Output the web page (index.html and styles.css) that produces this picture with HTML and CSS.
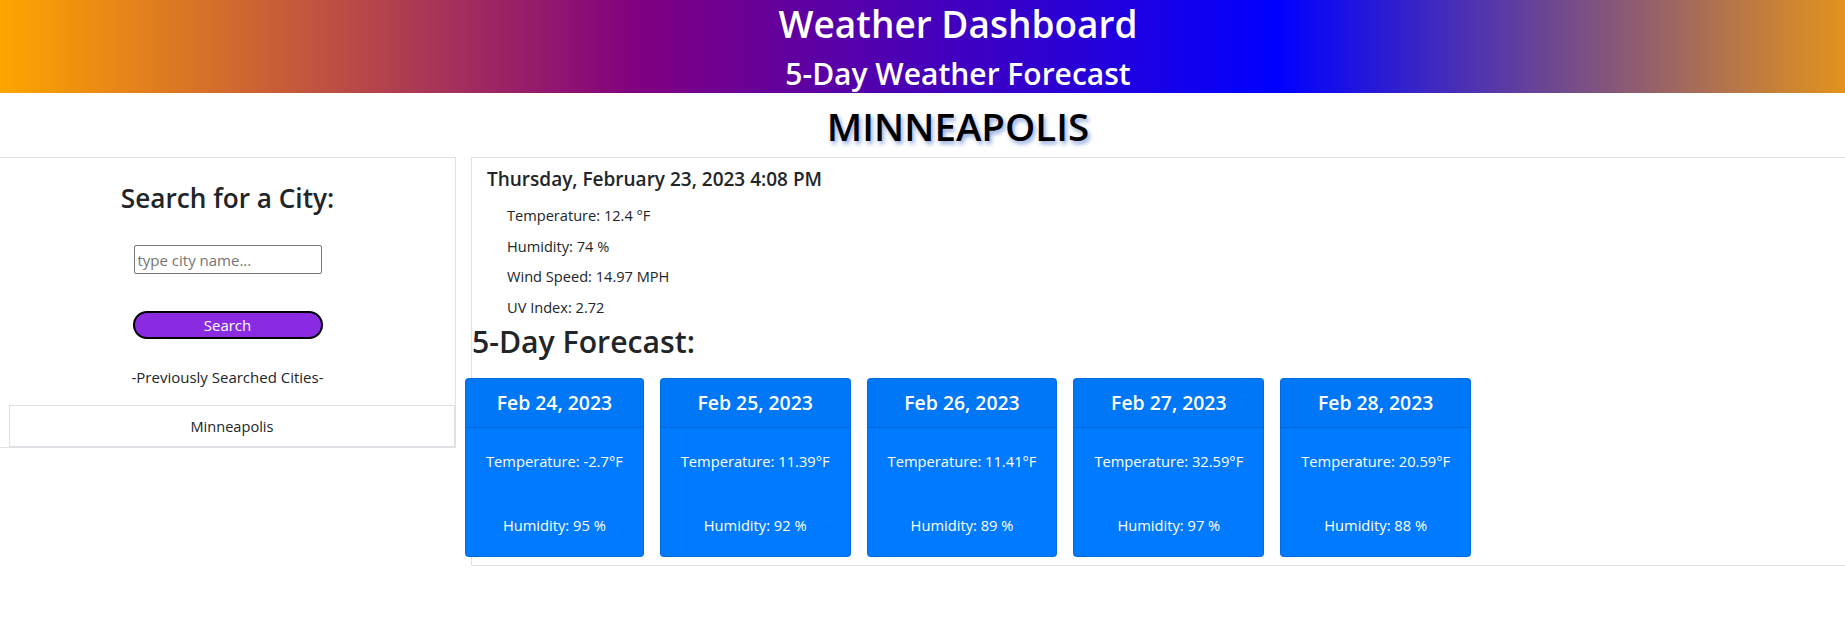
FILE: index.html
```html
<!DOCTYPE html>
<html lang="en">
<head>
<meta charset="utf-8">
<title>Weather Dashboard</title>
<link rel="stylesheet" href="styles.css">
</head>
<body>
<div class="page">
  <header class="banner">
    <h1 class="banner-title">Weather Dashboard</h1>
    <h3 class="banner-sub">5-Day Weather Forecast</h3>
  </header>
  <h2 class="city">MINNEAPOLIS</h2>
  <div class="main">
    <aside class="sidebar">
      <h2 class="search-title">Search for a City:</h2>
      <input class="city-input" type="text" placeholder="type city name...">
      <button class="search-btn" type="button">Search</button>
      <p class="prev-label">-Previously Searched Cities-</p>
      <ul class="history">
        <li class="history-item">Minneapolis</li>
      </ul>
    </aside>
    <section class="current">
      <h5 class="current-date">Thursday, February 23, 2023 4:08 PM</h5>
      <div class="current-details">
        <p>Temperature: 12.4 °F</p>
        <p>Humidity: 74 %</p>
        <p>Wind Speed: 14.97 MPH</p>
        <p>UV Index: 2.72</p>
      </div>
      <h2 class="forecast-title">5-Day Forecast:</h2>
      <div class="cards">
        <div class="card">
          <div class="card-header"><h5>Feb 24, 2023</h5></div>
          <div class="card-body"><p class="temp">Temperature: -2.7°F</p><p class="hum">Humidity: 95 %</p></div>
        </div>
        <div class="card">
          <div class="card-header"><h5>Feb 25, 2023</h5></div>
          <div class="card-body"><p class="temp">Temperature: 11.39°F</p><p class="hum">Humidity: 92 %</p></div>
        </div>
        <div class="card">
          <div class="card-header"><h5>Feb 26, 2023</h5></div>
          <div class="card-body"><p class="temp">Temperature: 11.41°F</p><p class="hum">Humidity: 89 %</p></div>
        </div>
        <div class="card">
          <div class="card-header"><h5>Feb 27, 2023</h5></div>
          <div class="card-body"><p class="temp">Temperature: 32.59°F</p><p class="hum">Humidity: 97 %</p></div>
        </div>
        <div class="card">
          <div class="card-header"><h5>Feb 28, 2023</h5></div>
          <div class="card-body"><p class="temp">Temperature: 20.59°F</p><p class="hum">Humidity: 88 %</p></div>
        </div>
      </div>
    </section>
  </div>
</div>
</body>
</html>
```

FILE: styles.css
```css
* { box-sizing: border-box; }
html, body { margin: 0; padding: 0; }
body {
  font-family: "Open Sans", "Noto Sans", sans-serif;
  font-size: 14.6px;
  line-height: 24px;
  color: #212529;
  background: #fff;
  overflow: hidden;
}
.page { width: 1916px; }

.banner {
  height: 93px;
  background: linear-gradient(to right, #ffa500, #800080, #0000ff, #ffa500);
  color: #fff;
  text-align: center;
}
.banner-title {
  margin: 0;
  font-size: 37px;
  line-height: 48px;
  font-weight: 600;
}
.banner-sub {
  margin: 9px 0 0;
  font-size: 30px;
  line-height: 34px;
  font-weight: 600;
}

.city {
  margin: 11px 0 9px;
  font-size: 38.5px;
  line-height: 44px;
  font-weight: 600;
  text-align: center;
  color: #000;
  text-shadow: 2px 3px 4px rgba(70, 110, 200, 0.6);
}

.main {
  display: flex;
  align-items: flex-start;
}

.sidebar {
  width: 457px;
  margin-left: -1px;
  border: 1px solid #dee2e6;
  padding-top: 21.5px;
  text-align: center;
}
.search-title {
  margin: 0;
  font-size: 26.2px;
  line-height: 36px;
  font-weight: 600;
}
.city-input {
  display: block;
  width: 188px;
  height: 29px;
  margin: 29.5px auto 0;
  padding: 1px 3px;
  border: 1px solid #767676;
  border-radius: 2px;
  font: inherit;
  font-size: 15px;
  color: #212529;
}
.city-input::placeholder { color: #757575; }
.search-btn {
  display: block;
  width: 190px;
  height: 28px;
  margin: 37px auto 0;
  padding: 0;
  border: 2px solid #000;
  border-radius: 14px;
  background: #8a2be2;
  color: #fff;
  font: inherit;
  font-size: 15px;
  line-height: 24px;
}
.prev-label {
  margin: 27.3px 0 0;
  font-size: 15px;
  line-height: 22px;
}
.history {
  list-style: none;
  margin: 16.7px 0 0 9px;
  padding: 0;
}
.history-item {
  border: 1px solid #dee2e6;
  padding: 8px;
  line-height: 24px;
}

.current {
  flex: 1;
  margin-left: 15px;
  border: 1px solid #dee2e6;
  padding: 9px 0 8px;
}
.current-date {
  margin: 0 0 0 15px;
  font-size: 19px;
  line-height: 24px;
  font-weight: 600;
}
.current-details {
  margin-top: 9px;
  padding-left: 35px;
}
.current-details p {
  margin: 0;
  line-height: 30.67px;
}
.forecast-title {
  margin: 1.3px 0 0;
  font-size: 30.2px;
  line-height: 36px;
  font-weight: 600;
}

.cards {
  display: flex;
  align-items: flex-start;
  gap: 16px;
  margin: 18px 0 0 -7px;
}
.card {
  border: 1px solid rgba(0, 0, 0, 0.125);
  border-radius: 4px;
  background: #007bff;
  color: #fff;
  text-align: center;
  overflow: hidden;
}
.card-header {
  padding: 12px 20px;
  background: rgba(0, 0, 0, 0.03);
  border-bottom: 1px solid rgba(0, 0, 0, 0.125);
}
.card-header h5 {
  margin: 0;
  font-size: 19.4px;
  line-height: 24px;
  font-weight: 600;
}
.card-body {
  padding: 21px 20px 19px;
  font-size: 14.7px;
}
.card-body p { margin: 0; }
.card-body .temp { margin-bottom: 40px; }
```
